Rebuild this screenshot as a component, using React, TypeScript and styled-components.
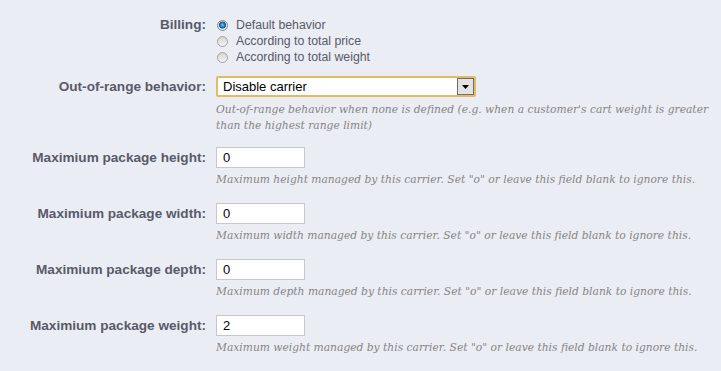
import React from "react";
import styled, { createGlobalStyle } from "styled-components";

const Global = createGlobalStyle`
  html, body { margin: 0; padding: 0; background: #ebedf4; }
  body { font-family: "Liberation Sans", Arial, sans-serif; }
`;

const Form = styled.div`
  padding-top: 17px;
  display: flex;
  flex-direction: column;
`;

const Row = styled.div<{ $mb: number }>`
  display: grid;
  grid-template-columns: 206px 1fr;
  column-gap: 10px;
  margin-bottom: ${(p) => p.$mb}px;
`;

const Label = styled.label<{ $pt: number }>`
  text-align: right;
  font-weight: bold;
  font-size: 13.6px;
  color: #585a69;
  line-height: 16px;
  padding-top: ${(p) => p.$pt}px;
`;

const Field = styled.div`
  display: flex;
  flex-direction: column;
  align-items: flex-start;
`;

const RadioLine = styled.label`
  display: flex;
  align-items: center;
  height: 16px;
  font-size: 12.3px;
  color: #585a69;
  gap: 8px;
`;

const Radio = styled.span<{ $on?: boolean }>`
  width: 11px;
  height: 11px;
  margin-left: 1px;
  border-radius: 50%;
  box-sizing: border-box;
  border: 1px solid ${(p) => (p.$on ? "#7b8596" : "#a4a4a4")};
  background: ${(p) =>
    p.$on
      ? "radial-gradient(circle at 50% 45%, #7fc3ec 0, #1d7fc0 2.2px, #0b4f86 3.2px, #e7e7e7 3.8px, #fdfdfd 100%)"
      : "linear-gradient(#d4d4d4, #f4f4f4)"};
`;

const Select = styled.div`
  width: 260px;
  height: 21px;
  box-sizing: border-box;
  border: 2px solid #e6ba63;
  border-radius: 2px;
  background: #fff;
  display: flex;
  align-items: center;
  justify-content: space-between;
  font-size: 13px;
  color: #000;
  padding-left: 5px;
`;

const Arrow = styled.span`
  width: 17px;
  height: 17px;
  box-sizing: border-box;
  border: 1px solid #6e6e6e;
  background: #e3e3e3;
  display: flex;
  align-items: center;
  justify-content: center;
`;

const Input = styled.div`
  width: 89px;
  height: 21px;
  box-sizing: border-box;
  border: 1px solid #c8c8c8;
  background: #fff;
  font-size: 13px;
  color: #000;
  padding-left: 6px;
  line-height: 19px;
`;

const Help = styled.p<{ $mt: number }>`
  margin: ${(p) => p.$mt}px 0 0 0;
  font-family: "DejaVu Serif", serif;
  font-style: italic;
  font-size: 10.7px;
  line-height: 16px;
  color: #858585;
  max-width: 502px;
`;

const fields = [
  { label: "Maximium package height:", value: "0", help: "Maximum height managed by this carrier. Set \"o\" or leave this field blank to ignore this." },
  { label: "Maximium package width:", value: "0", help: "Maximum width managed by this carrier. Set \"o\" or leave this field blank to ignore this." },
  { label: "Maximium package depth:", value: "0", help: "Maximum depth managed by this carrier. Set \"o\" or leave this field blank to ignore this." },
  { label: "Maximium package weight:", value: "2", help: "Maximum weight managed by this carrier. Set \"o\" or leave this field blank to ignore this." },
];

export default function App() {
  return (
    <>
      <Global />
      <Form>
        <Row $mb={11}>
          <Label $pt={0}>Billing:</Label>
          <Field>
            <RadioLine><Radio $on />Default behavior</RadioLine>
            <RadioLine><Radio />According to total price</RadioLine>
            <RadioLine><Radio />According to total weight</RadioLine>
          </Field>
        </Row>
        <Row $mb={13}>
          <Label $pt={3}>Out-of-range behavior:</Label>
          <Field>
            <Select>
              Disable carrier
              <Arrow>
                <svg width="7" height="4" viewBox="0 0 7 4"><path d="M0 0h7L3.5 4z" fill="#000" /></svg>
              </Arrow>
            </Select>
            <Help $mt={5}>
              Out-of-range behavior when none is defined (e.g. when a customer's cart weight is greater than the highest range limit)
            </Help>
          </Field>
        </Row>
        {fields.map((f) => (
          <Row $mb={15} key={f.label}>
            <Label $pt={3}>{f.label}</Label>
            <Field>
              <Input>{f.value}</Input>
              <Help $mt={4}>{f.help}</Help>
            </Field>
          </Row>
        ))}
      </Form>
    </>
  );
}
